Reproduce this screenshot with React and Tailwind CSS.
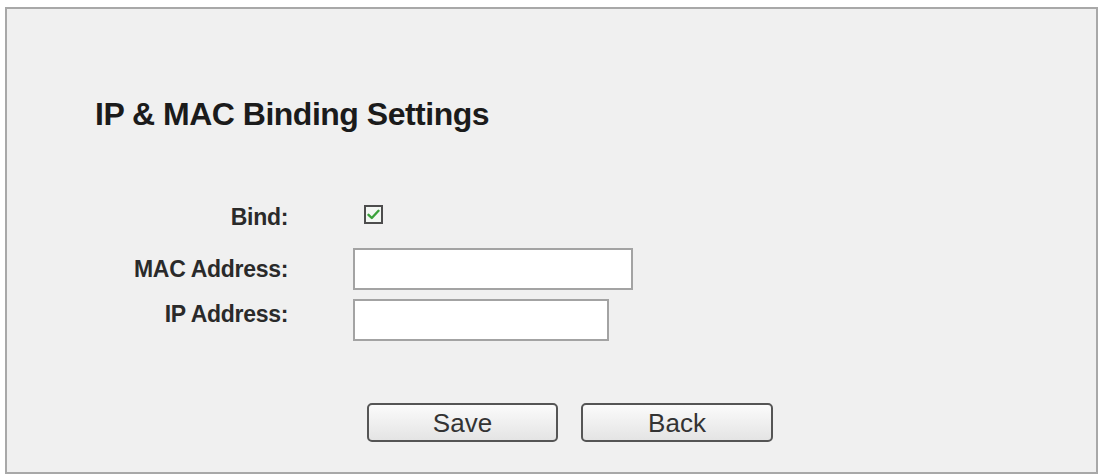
import React from "react";

export default function App() {
  return (
    <div
      className="w-[1101px] h-[476px] bg-white pt-[7px] pl-[5px] pr-[3px] pb-[2px]"
      style={{ fontFamily: '"Liberation Sans", Arial, sans-serif' }}
    >
      <div className="h-[467px] border-2 border-[#a8a8a8] bg-[#f0f0f0] flex flex-col">
        <h1 className="ml-[88px] mt-[87px] text-[32px] leading-[36px] tracking-[-0.5px] font-bold text-[#1b1b1b]">
          IP &amp; MAC Binding Settings
        </h1>

        <div className="flex flex-col mt-[73px]">
          <div className="flex items-start">
            <div className="w-[281px] text-right text-[23px] tracking-[-0.3px] leading-[24px] h-[24px] font-bold text-[#2a2a2a]">
              Bind:
            </div>
            <div className="ml-[76px] w-[19px] h-[19px] border-2 border-[#4d4d4d] bg-[#f3f7f3] flex items-center justify-center">
              <svg width="13" height="11" viewBox="0 0 13 11">
                <path
                  d="M1.5 5.8 L4.8 9 L11.5 1.8"
                  fill="none"
                  stroke="#3aa23a"
                  strokeWidth="2.4"
                  strokeLinecap="round"
                  strokeLinejoin="round"
                />
              </svg>
            </div>
          </div>

          <div className="flex items-start mt-[19px]">
            <div className="w-[281px] text-right text-[23px] tracking-[-0.3px] leading-[42px] font-bold text-[#2a2a2a]">
              MAC Address:
            </div>
            <input
              type="text"
              className="ml-[65px] w-[280px] h-[42px] border-2 border-[#a3a3a3] bg-white outline-none"
            />
          </div>

          <div className="flex items-start mt-[9px]">
            <div className="w-[281px] text-right text-[23px] tracking-[-0.3px] leading-[30px] font-bold text-[#2a2a2a]">
              IP Address:
            </div>
            <input
              type="text"
              className="ml-[65px] w-[256px] h-[42px] border-2 border-[#a3a3a3] bg-white outline-none"
            />
          </div>

          <div className="flex mt-[62px] ml-[360px] gap-[23px]">
            <button className="w-[191px] h-[39px] border-2 border-[#555555] rounded-[5px] bg-gradient-to-b from-[#fbfbfb] to-[#e4e4e4] text-[26px] leading-[30px] text-[#333333]">
              Save
            </button>
            <button className="w-[192px] h-[39px] border-2 border-[#555555] rounded-[5px] bg-gradient-to-b from-[#fbfbfb] to-[#e4e4e4] text-[26px] leading-[30px] text-[#333333]">
              Back
            </button>
          </div>
        </div>
      </div>
    </div>
  );
}
